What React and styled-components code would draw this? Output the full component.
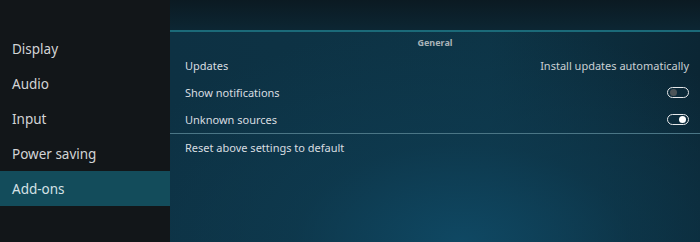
import React from "react";
import styled, { createGlobalStyle } from "styled-components";

const Global = createGlobalStyle`
  html, body { margin: 0; padding: 0; background: #0c2230; }
  body { font-family: "Noto Sans", "Open Sans", sans-serif; }
`;

const Screen = styled.div`
  display: flex;
  width: 700px;
  height: 242px;
  overflow: hidden;
`;

const Sidebar = styled.nav`
  width: 170px;
  flex-shrink: 0;
  background: #121619;
  padding-top: 31px;
  box-sizing: border-box;
`;

const NavItem = styled.div`
  height: 35px;
  display: flex;
  align-items: center;
  padding-left: 12px;
  font-size: 13.5px;
  color: ${(p) => (p.$active ? "#d6e2e6" : "#d2d4d6")};
  background: ${(p) => (p.$active ? "#134c5b" : "transparent")};
`;

const Main = styled.section`
  flex: 1;
  display: flex;
  flex-direction: column;
  background:
    radial-gradient(ellipse 70% 90% at 55% 100%, #0f4863 0%, rgba(14, 60, 82, 0.6) 45%, rgba(12, 40, 55, 0) 100%),
    linear-gradient(90deg, #0d3143 0%, #0d3446 60%, #0b2634 100%);
`;

const TopBar = styled.div`
  height: 30px;
  background: linear-gradient(180deg, #0b1a22 0%, #0c2633 100%);
  border-bottom: 2px solid #1b6a79;
`;

const GroupTitle = styled.div`
  height: 20px;
  display: flex;
  align-items: center;
  justify-content: center;
  font-size: 9px;
  font-weight: 700;
  color: #a9b3b8;
`;

const Row = styled.div`
  height: 27px;
  display: flex;
  align-items: center;
  justify-content: space-between;
  padding: 0 11px 0 15px;
  font-size: 11px;
  color: #d8dde0;
`;

const Value = styled.span`
  color: #c9d0d4;
`;

const Divider = styled.div`
  height: 1px;
  background: #4b7686;
`;

const Toggle = styled.span`
  position: relative;
  width: 20px;
  height: 9px;
  border: 1.5px solid #e6e8ea;
  border-radius: 7px;
  box-sizing: content-box;
  &::after {
    content: "";
    position: absolute;
    top: 1px;
    ${(p) => (p.$on ? "right: 2px;" : "left: 2px;")}
    width: 7px;
    height: 7px;
    border-radius: 50%;
    background: ${(p) => (p.$on ? "#ffffff" : "#4c5458")};
  }
`;

const menu = ["Display", "Audio", "Input", "Power saving", "Add-ons"];

export default function App() {
  return (
    <>
      <Global />
      <Screen>
        <Sidebar>
          {menu.map((m) => (
            <NavItem key={m} $active={m === "Add-ons"}>
              {m}
            </NavItem>
          ))}
        </Sidebar>
        <Main>
          <TopBar />
          <GroupTitle>General</GroupTitle>
          <Row>
            <span>Updates</span>
            <Value>Install updates automatically</Value>
          </Row>
          <Row>
            <span>Show notifications</span>
            <Toggle />
          </Row>
          <Row>
            <span>Unknown sources</span>
            <Toggle $on />
          </Row>
          <Divider />
          <Row>
            <span>Reset above settings to default</span>
          </Row>
        </Main>
      </Screen>
    </>
  );
}
